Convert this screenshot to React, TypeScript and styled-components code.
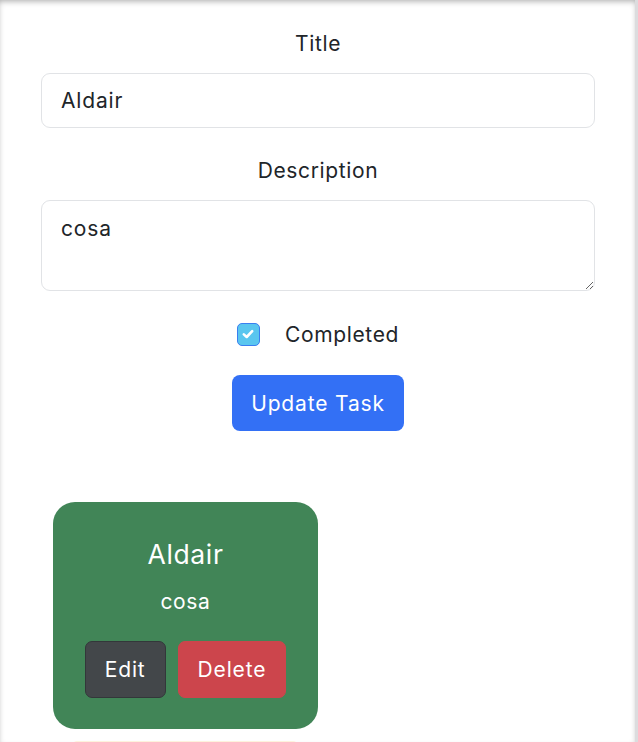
import React from "react";
import styled, { createGlobalStyle } from "styled-components";

const Global = createGlobalStyle`
  html, body { margin: 0; padding: 0; background: #fff; overflow: hidden; }
  body { font-family: "Inter", "Roboto", "Liberation Sans", sans-serif; color: #212529; letter-spacing: 0.04em; }
  * { box-sizing: border-box; }
`;

const Page = styled.div`
  width: 638px;
  height: 742px;
  overflow: hidden;
  position: relative;
  border-right: 3px solid #dcdcde;
  box-shadow: inset 0 3px 6px -2px rgba(0, 0, 0, 0.35);
`;

const Form = styled.form`
  display: flex;
  flex-direction: column;
  align-items: center;
  padding: 29px 40px 0 41px;
`;

const Label = styled.label`
  font-size: 21px;
  line-height: 30px;
  text-align: center;
  color: #212529;
`;

const Input = styled.input`
  width: 554px;
  height: 55px;
  margin: 14px 0 28px;
  padding: 0 19px;
  border: 1.5px solid #e1e3e6;
  border-radius: 9px;
  font-family: inherit;
  letter-spacing: 0.04em;
  font-size: 21px;
  color: #212529;
  outline: none;
`;

const TextArea = styled.textarea`
  width: 554px;
  height: 91px;
  margin: 14px 0 28px;
  padding: 15px 19px;
  border: 1.5px solid #e1e3e6;
  border-radius: 9px;
  font-family: inherit;
  letter-spacing: 0.04em;
  font-size: 21px;
  color: #212529;
  resize: vertical;
  outline: none;
`;

const CheckRow = styled.div`
  display: flex;
  align-items: center;
  gap: 25px;
  height: 30px;
`;

const Box = styled.span`
  width: 23px;
  height: 23px;
  border-radius: 5px;
  background: #5ac6ef;
  border: 1.5px solid #3a7ff0;
  display: inline-flex;
  align-items: center;
  justify-content: center;
`;

const CheckLabel = styled.span`
  font-size: 21px;
  color: #212529;
`;

const PrimaryButton = styled.button`
  margin-top: 26px;
  height: 56px;
  padding: 0 19px;
  border: none;
  border-radius: 8px;
  background: #3370f5;
  color: #fff;
  font-family: inherit;
  letter-spacing: 0.04em;
  font-size: 21px;
`;

const CardList = styled.div`
  display: flex;
  flex-direction: column;
  align-items: flex-start;
  gap: 12px;
  margin-top: 71px;
  padding-left: 53px;
`;

const Card = styled.div`
  width: 265px;
  height: 227px;
  border-radius: 22px;
  background: #418557;
  color: #fff;
  display: flex;
  flex-direction: column;
  align-items: center;
  padding-top: 34px;
`;

const NextCard = styled.div`
  width: 224px;
  height: 200px;
  margin-left: 20px;
  border-radius: 4px;
  background: #fdf3dd;
`;

const CardTitle = styled.div`
  font-size: 26.5px;
  line-height: 36px;
`;

const CardDesc = styled.div`
  margin-top: 15px;
  font-size: 21px;
  line-height: 30px;
`;

const Actions = styled.div`
  display: flex;
  gap: 12px;
  margin-top: 24px;
`;

const ActionButton = styled.button<{ $variant: "dark" | "danger" }>`
  height: 57px;
  padding: 0 19px;
  border-radius: 7px;
  border: 1.5px solid ${(p) => (p.$variant === "dark" ? "#33373a" : "#cc454c")};
  background: ${(p) => (p.$variant === "dark" ? "#43474a" : "#cc454c")};
  color: #fff;
  font-family: inherit;
  letter-spacing: 0.04em;
  font-size: 21px;
`;

export default function App() {
  return (
    <Page>
      <Global />
      <Form onSubmit={(e) => e.preventDefault()}>
        <Label>Title</Label>
        <Input defaultValue="Aldair" />
        <Label>Description</Label>
        <TextArea defaultValue="cosa" />
        <CheckRow>
          <Box>
            <svg width="16" height="16" viewBox="0 0 16 16">
              <path d="M3.8 8.4 L6.7 11 L12.2 5.2" fill="none" stroke="#fff" strokeWidth="2.6" strokeLinecap="round" strokeLinejoin="round" />
            </svg>
          </Box>
          <CheckLabel>Completed</CheckLabel>
        </CheckRow>
        <PrimaryButton type="submit">Update Task</PrimaryButton>
      </Form>
      <CardList>
        <Card>
          <CardTitle>Aldair</CardTitle>
          <CardDesc>cosa</CardDesc>
          <Actions>
            <ActionButton $variant="dark">Edit</ActionButton>
            <ActionButton $variant="danger">Delete</ActionButton>
          </Actions>
        </Card>
        <NextCard />
      </CardList>
    </Page>
  );
}
